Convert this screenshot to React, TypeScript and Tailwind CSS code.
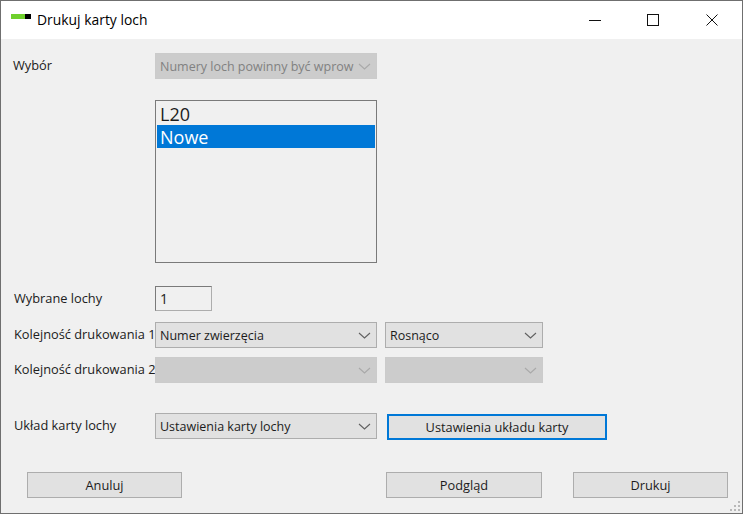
import React from "react";

function Chevron({ color }: { color: string }) {
  return (
    <svg width="13" height="7" viewBox="0 0 13 7" fill="none" className="shrink-0">
      <path d="M1 1L6.5 6L12 1" stroke={color} strokeWidth="1.1" />
    </svg>
  );
}

function Select({ text, disabled, className }: { text?: string; disabled?: boolean; className: string }) {
  return (
    <div
      className={
        "flex h-[26px] shrink-0 items-center justify-between border pl-[4px] pr-[5px] text-[12.5px] " +
        (disabled
          ? "border-[#cbcbcb] bg-[#cccccc] text-[#818181] "
          : "border-[#adadad] bg-[#e1e1e1] text-[#1c1c1c] ") +
        className
      }
    >
      <span className="whitespace-nowrap pt-[2px]">{text}</span>
      <Chevron color={disabled ? "#a9a9a9" : "#606060"} />
    </div>
  );
}

function Label({ children, className }: { children: React.ReactNode; className: string }) {
  return <div className={"shrink-0 whitespace-nowrap text-[12.8px] text-[#202020] " + className}>{children}</div>;
}

function Btn({ children, className }: { children: React.ReactNode; className: string }) {
  return (
    <div className={"flex h-[26px] shrink-0 items-center justify-center border border-[#adadad] bg-[#e1e1e1] pt-[2px] text-[12.8px] text-[#1c1c1c] " + className}>
      {children}
    </div>
  );
}

export default function App() {
  return (
    <div className="relative flex h-[514px] w-[743px] flex-col overflow-hidden border border-[#6f6f6f] bg-[#f0f0f0] font-['Open_Sans',sans-serif]">
      <div className="flex h-[38px] shrink-0 items-center bg-white">
        <div className="mb-[8px] ml-[10px] flex h-[5px] w-[20px]">
          <div className="w-[14px] bg-[#6fd02c]" />
          <div className="w-[6px] bg-black" />
        </div>
        <div className="ml-[6px] pb-[1px] text-[13.9px] leading-[20px] text-black">Drukuj karty loch</div>
        <div className="ml-auto flex items-center">
          <svg width="12" height="12" viewBox="0 0 12 12" className="mr-[46px]" fill="none">
            <path d="M0 6.5H12" stroke="#111" />
          </svg>
          <svg width="12" height="12" viewBox="0 0 12 12" className="mr-[47px]" fill="none">
            <rect x="0.5" y="0.5" width="11" height="11" stroke="#111" />
          </svg>
          <svg width="12" height="12" viewBox="0 0 12 12" className="mr-[24px]" fill="none">
            <path d="M0.5 0.5L11.5 11.5M11.5 0.5L0.5 11.5" stroke="#111" />
          </svg>
        </div>
      </div>

      <div className="flex items-center pl-[12px] pt-[14px]">
        <Label className="w-[142px]">Wybór</Label>
        <Select disabled text="Numery loch powinny być wprow" className="w-[222px]" />
      </div>

      <div className="ml-[154px] mt-[21px] flex h-[163px] w-[222px] flex-col border border-[#7a7a7a] bg-[#f0f0f0] px-[1px] pt-[1px] text-[18px] text-[#1c1c1c]">
        <div className="h-[23px] pl-[3px] pt-[1px] leading-[23px]">L20</div>
        <div className="h-[23px] bg-[#0078d7] pl-[3px] pt-[1px] leading-[22px] text-white">Nowe</div>
      </div>

      <div className="mt-[23px] flex items-center pl-[13px]">
        <Label className="w-[141px] pt-[1px]">Wybrane lochy</Label>
        <div className="flex h-[25px] w-[57px] items-center border border-[#7a7a7a] border-r-[#adadad] border-b-[#adadad] bg-[#f0f0f0] pl-[4px] text-[14px] text-[#1c1c1c]">1</div>
      </div>

      <div className="mt-[11px] flex items-center pl-[13px]">
        <Label className="w-[141px]">Kolejność drukowania 1</Label>
        <Select text="Numer zwierzęcia" className="w-[222px]" />
        <Select text="Rosnąco" className="ml-[8px] w-[158px]" />
      </div>

      <div className="mt-[9px] flex items-center pl-[13px]">
        <Label className="w-[141px]">Kolejność drukowania 2</Label>
        <Select disabled className="w-[222px]" />
        <Select disabled className="ml-[8px] w-[158px]" />
      </div>

      <div className="mt-[30px] flex items-start pl-[13px]">
        <Label className="mt-[3px] w-[141px]">Układ karty lochy</Label>
        <Select text="Ustawienia karty lochy" className="w-[222px]" />
        <Btn className="ml-[10px] mt-[1px] w-[220px] border-2 !border-[#0078d7]">Ustawienia układu karty</Btn>
      </div>

      <div className="mt-[32px] flex pl-[26px]">
        <Btn className="w-[155px]">Anuluj</Btn>
        <Btn className="ml-[204px] w-[156px]">Podgląd</Btn>
        <Btn className="ml-[31px] w-[155px]">Drukuj</Btn>
      </div>

      <svg width="11" height="11" viewBox="0 0 11 11" className="absolute bottom-[1px] right-[1px]">
        <g fill="#b8b8b8">
          <rect x="8" y="0" width="2" height="2" />
          <rect x="4" y="4" width="2" height="2" />
          <rect x="8" y="4" width="2" height="2" />
          <rect x="0" y="8" width="2" height="2" />
          <rect x="4" y="8" width="2" height="2" />
          <rect x="8" y="8" width="2" height="2" />
        </g>
      </svg>
    </div>
  );
}
